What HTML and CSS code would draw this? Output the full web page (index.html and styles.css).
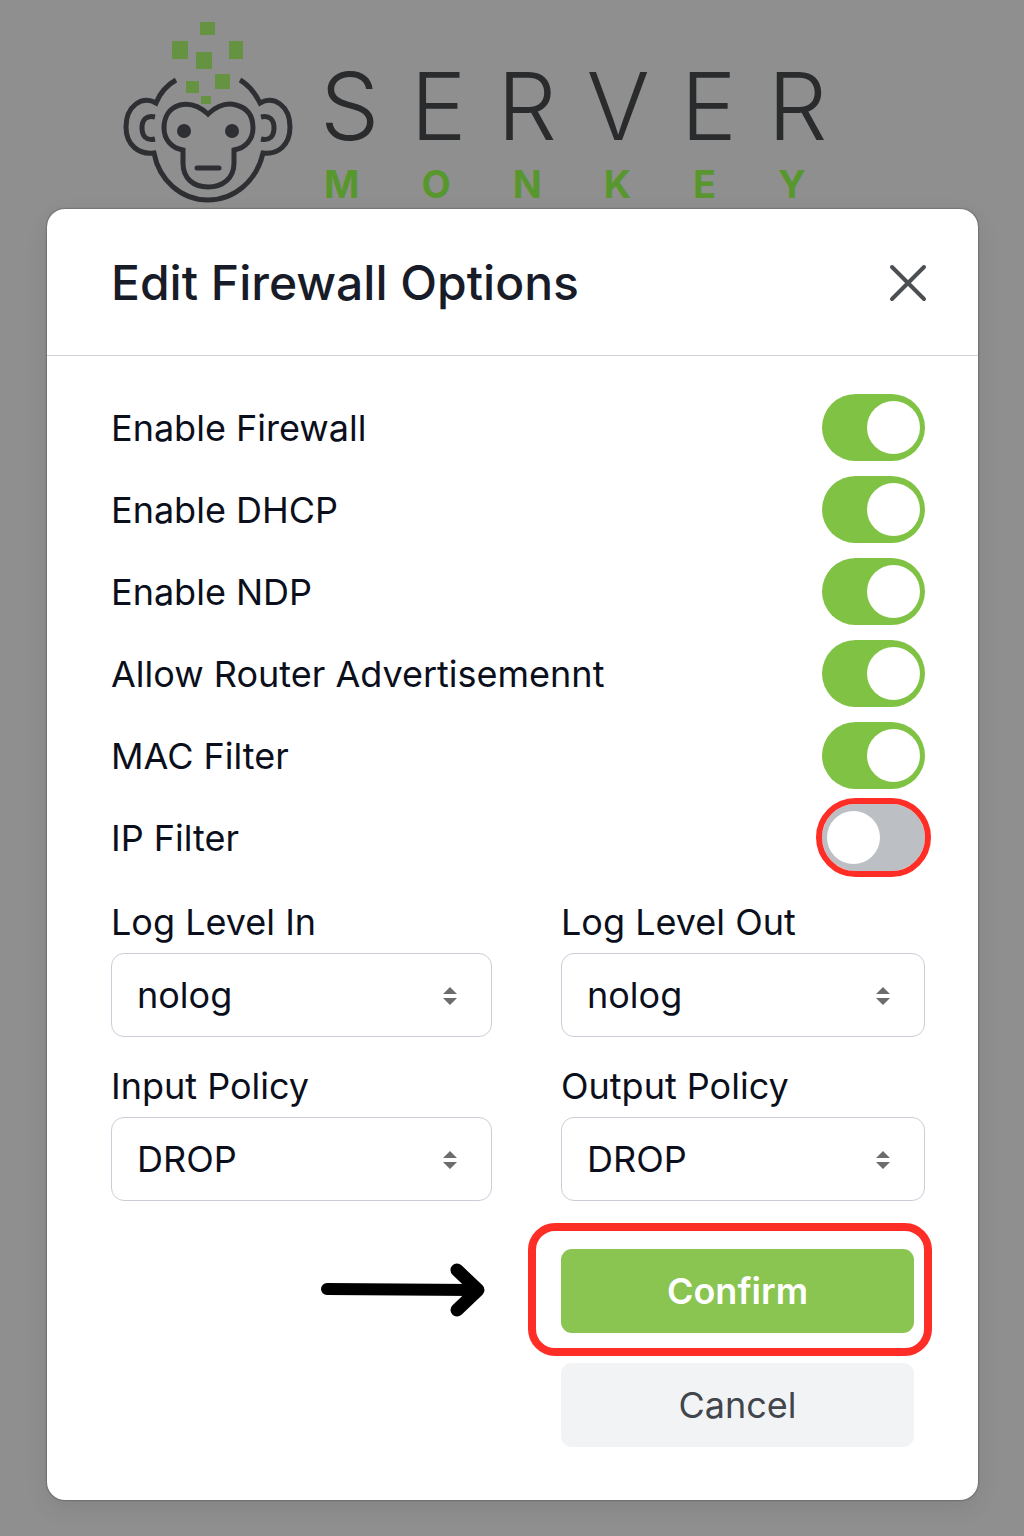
FILE: index.html
```html
<!DOCTYPE html>
<html lang="en">
<head>
  <meta charset="UTF-8">
  <meta name="viewport" content="width=device-width, initial-scale=1.0">
  <title>Edit Firewall Options</title>
  <link rel="stylesheet" href="styles.css">
</head>
<body>
  <header class="brand">
    <svg class="brand-icon" viewBox="0 0 172 184" aria-hidden="true">
      <g fill="#659342">
        <rect x="78" y="2" width="15" height="13" />
        <rect x="50" y="21" width="16" height="18" />
        <rect x="107" y="21" width="14" height="18" />
        <rect x="74" y="32" width="16" height="17" />
        <rect x="93" y="54" width="15" height="15" />
        <rect x="64" y="61" width="13" height="12" />
        <rect x="79" y="76" width="10" height="8" />
      </g>
      <g fill="none" stroke="#2e2f32" stroke-width="5">
        <path d="M54 60C45 65 38 73 34 83C20 75 4 86 4 107C4 125 17 135 32 133C37 160 59 180 86 180C113 180 135 160 141 133C156 135 168 125 168 107C168 86 152 75 138 83C133 73 127 65 118 60" />
        <path d="M86 94C75 84 66 83 58 85C47 88 42 97 42 108C42 119 49 128 61 130V143C61 158 71 167 86 167C101 167 112 158 112 143V130C124 128 131 119 131 108C131 97 126 88 114 85C107 83 97 84 86 94Z" />
        <path d="M33 97C24 95 20 100 20 108C20 116 24 121 33 119" />
        <path d="M139 97C148 95 152 100 152 108C152 116 148 121 139 119" />
        <path d="M75 148H97" stroke-linecap="round" />
      </g>
      <g fill="#2e2f32">
        <circle cx="62" cy="111" r="7" />
        <circle cx="110" cy="111" r="7" />
      </g>
    </svg>
    <div class="brand-name">
      <span class="brand-server">SERVER</span>
      <span class="brand-monkey">MONKEY</span>
    </div>
  </header>

  <main class="modal" role="dialog" aria-labelledby="modal-title">
    <div class="modal-header">
      <h1 id="modal-title">Edit Firewall Options</h1>
      <button class="close" type="button" aria-label="Close">
        <svg viewBox="0 0 38 38" aria-hidden="true">
          <path d="M3 3L35 35M35 3L3 35" />
        </svg>
      </button>
    </div>

    <form class="modal-body">
      <div class="options">
        <label class="option">
          Enable Firewall
          <input class="toggle" type="checkbox" checked>
        </label>
        <label class="option">
          Enable DHCP
          <input class="toggle" type="checkbox" checked>
        </label>
        <label class="option">
          Enable NDP
          <input class="toggle" type="checkbox" checked>
        </label>
        <label class="option">
          Allow Router Advertisemennt
          <input class="toggle" type="checkbox" checked>
        </label>
        <label class="option">
          MAC Filter
          <input class="toggle" type="checkbox" checked>
        </label>
        <label class="option">
          IP Filter
          <input class="toggle marked" type="checkbox">
        </label>
      </div>

      <div class="fields">
        <div class="field">
          <label for="log-in">Log Level In</label>
          <div class="select">
            <select id="log-in"><option>nolog</option></select>
            <svg viewBox="0 0 14 18" aria-hidden="true"><path d="M0 7L7 0L14 7ZM0 11L7 18L14 11Z" /></svg>
          </div>
        </div>
        <div class="field">
          <label for="log-out">Log Level Out</label>
          <div class="select">
            <select id="log-out"><option>nolog</option></select>
            <svg viewBox="0 0 14 18" aria-hidden="true"><path d="M0 7L7 0L14 7ZM0 11L7 18L14 11Z" /></svg>
          </div>
        </div>
        <div class="field">
          <label for="policy-in">Input Policy</label>
          <div class="select">
            <select id="policy-in"><option>DROP</option></select>
            <svg viewBox="0 0 14 18" aria-hidden="true"><path d="M0 7L7 0L14 7ZM0 11L7 18L14 11Z" /></svg>
          </div>
        </div>
        <div class="field">
          <label for="policy-out">Output Policy</label>
          <div class="select">
            <select id="policy-out"><option>DROP</option></select>
            <svg viewBox="0 0 14 18" aria-hidden="true"><path d="M0 7L7 0L14 7ZM0 11L7 18L14 11Z" /></svg>
          </div>
        </div>
      </div>

      <div class="actions">
        <svg class="arrow" viewBox="0 0 164 56" aria-hidden="true">
          <path class="arrow-shaft" d="M6 26L152 27" />
          <path class="arrow-head" d="M136 7L157 27L136 47" />
        </svg>
        <div class="confirm-wrap">
          <button class="button confirm" type="button">Confirm</button>
        </div>
        <button class="button cancel" type="button">Cancel</button>
      </div>
    </form>
  </main>
</body>
</html>
```
FILE: styles.css
```css
* {
  box-sizing: border-box;
}

body {
  margin: 0;
  padding: 0 46px 36px 47px;
  background: #8f8f8f;
  font-family: Inter, 'Liberation Sans', sans-serif;
  font-size: 36px;
  line-height: 44px;
  color: #0b0f1c;
}

/* Logo */
.brand {
  display: flex;
  gap: 26px;
  padding: 20px 0 5px 75px;
}

.brand-icon {
  flex: none;
  width: 172px;
  height: 184px;
}

.brand-name {
  display: flex;
  flex-direction: column;
  padding-top: 28px;
  white-space: nowrap;
}

.brand-server {
  font-size: 94px;
  font-weight: 300;
  line-height: 116px;
  letter-spacing: 31px;
  color: #2a2b2d;
}

.brand-monkey {
  padding-left: 4px;
  font-size: 38px;
  font-weight: 700;
  line-height: 40px;
  letter-spacing: 62px;
  color: #57972e;
}

/* Modal */
.modal {
  background: #ffffff;
  border-radius: 18px;
  box-shadow: 0 0 2px rgba(0, 0, 0, 0.6), 0 8px 24px rgba(0, 0, 0, 0.08);
}

.modal-header {
  display: flex;
  justify-content: space-between;
  align-items: center;
  height: 147px;
  padding: 2px 51px 0 64px;
  border-bottom: 1px solid #d0d3da;
}

.modal-header h1 {
  margin: 0;
  font-size: 48px;
  font-weight: 500;
  line-height: 56px;
  color: #181c28;
}

.close {
  width: 38px;
  height: 38px;
  padding: 0;
  border: none;
  background: none;
  cursor: pointer;
}

.close svg {
  display: block;
  fill: none;
  stroke: #4c4f52;
  stroke-width: 4;
  stroke-linecap: round;
}

.modal-body {
  padding: 38px 53px 53px 64px;
}

.options {
  display: grid;
  gap: 15px;
}

.option {
  display: flex;
  justify-content: space-between;
  align-items: center;
}

.toggle {
  appearance: none;
  display: flex;
  align-items: center;
  width: 103px;
  height: 67px;
  margin: 0;
  padding: 0 5px;
  border-radius: 34px;
  background: #bcbfc3;
  cursor: pointer;
}

.toggle::before {
  content: '';
  width: 53px;
  height: 53px;
  border-radius: 50%;
  background: #ffffff;
}

.toggle:checked {
  justify-content: flex-end;
  background: #7fc244;
}

.toggle.marked {
  outline: 6px solid #fe2e27;
}

/* Selects */
.fields {
  display: grid;
  grid-template-columns: 381fr 364fr;
  gap: 27px 69px;
  margin-top: 29px;
}

.field {
  display: grid;
  gap: 9px;
}

.select {
  position: relative;
}

.select select {
  appearance: none;
  display: block;
  width: 100%;
  height: 84px;
  padding: 0 60px 0 25px;
  border: 1px solid #cbced8;
  border-radius: 13px;
  background: #ffffff;
  font: inherit;
  color: inherit;
}

.select svg {
  position: absolute;
  top: 34px;
  right: 35px;
  width: 14px;
  height: 18px;
  fill: #6c6c6c;
  pointer-events: none;
}

/* Buttons */
.actions {
  display: grid;
  grid-template-columns: 381fr 364fr;
  gap: 30px 69px;
  align-items: center;
  margin-top: 48px;
}

.arrow {
  justify-self: end;
  width: 164px;
  height: 56px;
  margin-right: 7px;
  fill: none;
  stroke: #000000;
  stroke-linecap: round;
  stroke-linejoin: round;
}

.arrow-shaft {
  stroke-width: 12;
}

.arrow-head {
  stroke-width: 13;
}

.confirm-wrap {
  position: relative;
  margin-right: 11px;
}

.confirm-wrap::after {
  content: '';
  position: absolute;
  inset: -26px -18px -23px -33px;
  border: 8px solid #fe2e27;
  border-radius: 27px;
  pointer-events: none;
}

.button {
  display: block;
  width: 100%;
  height: 84px;
  border: none;
  border-radius: 11px;
  font: inherit;
  cursor: pointer;
}

.confirm {
  background: #8ac451;
  font-weight: 600;
  color: #ffffff;
}

.cancel {
  grid-column: 2;
  width: auto;
  justify-self: stretch;
  margin-right: 11px;
  background: #f2f3f5;
  color: #41464c;
}
```
